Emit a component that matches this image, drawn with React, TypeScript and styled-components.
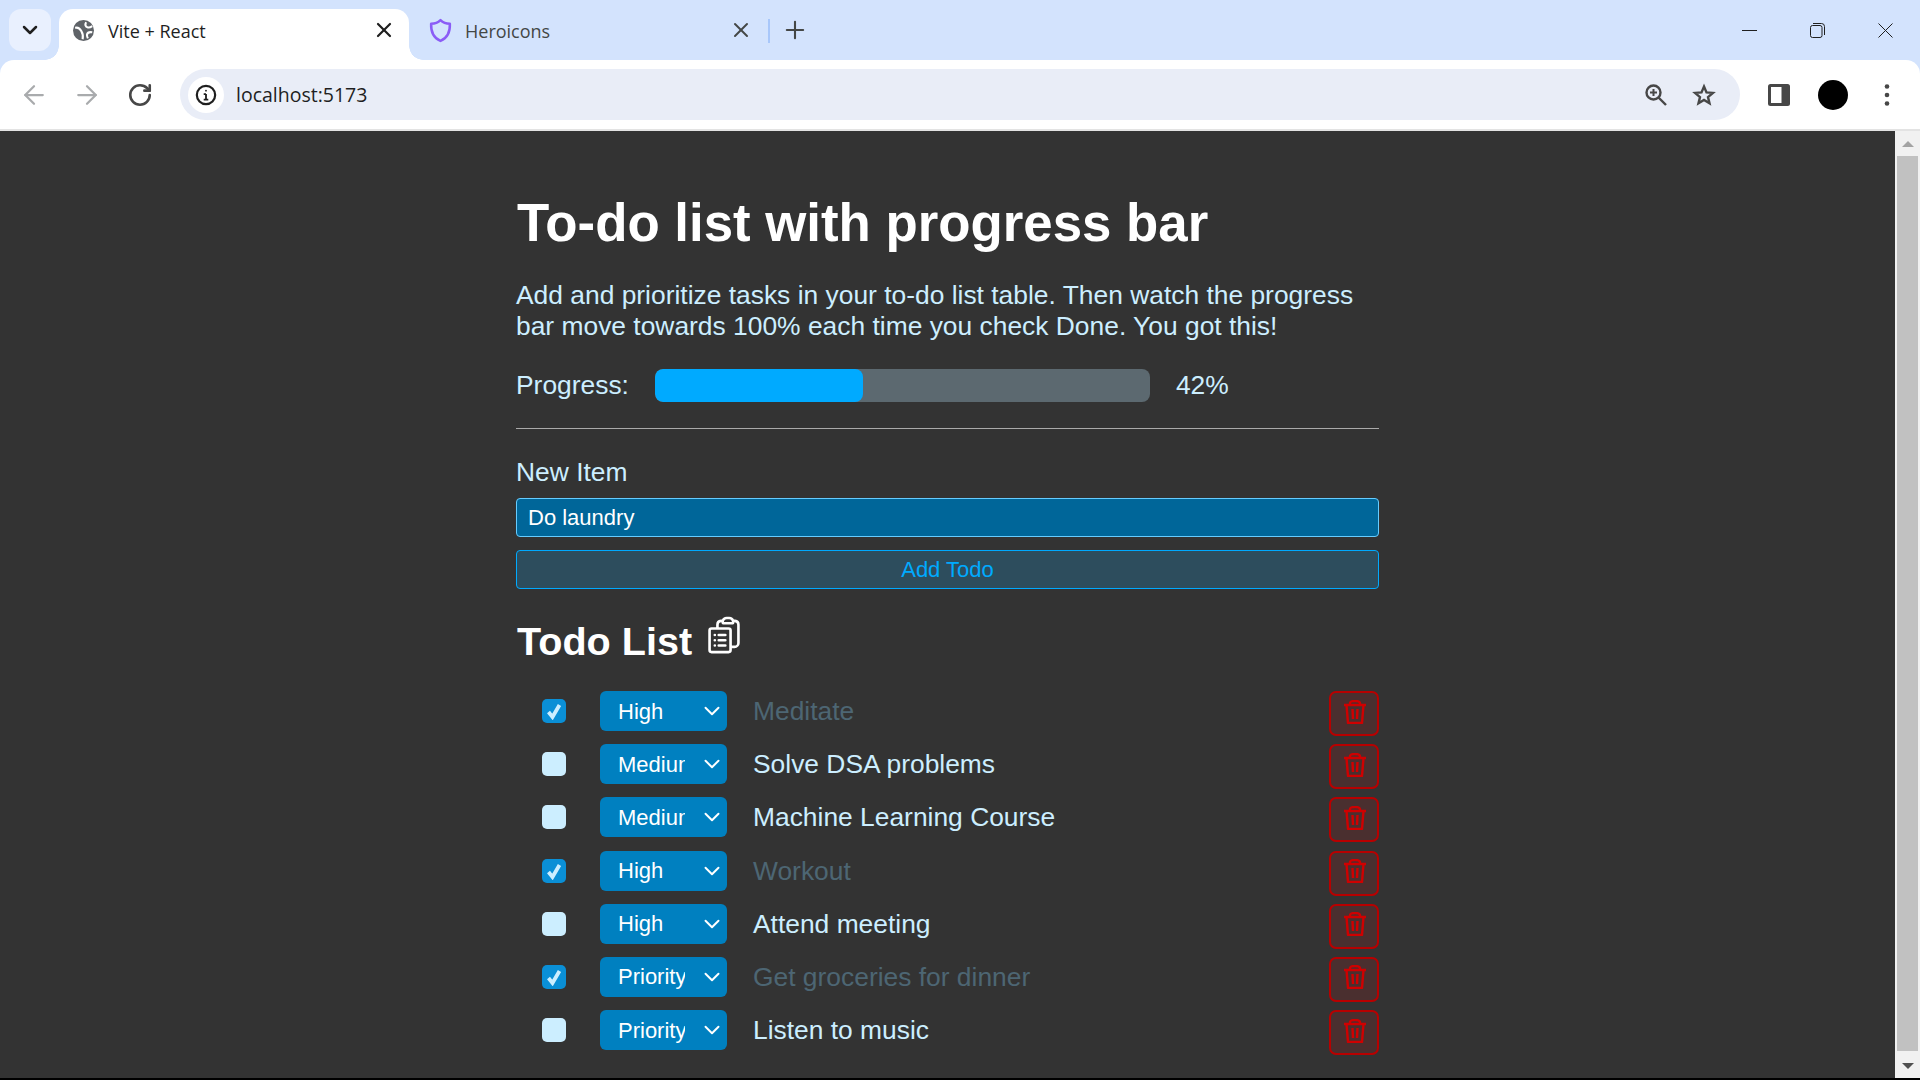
import React from 'react';
import styled, { createGlobalStyle } from 'styled-components';
import { ArrowLeft, ArrowRight, ChevronDown, Plus, RotateCw, X } from 'lucide-react';
import { HiOutlineClipboardDocumentList } from 'react-icons/hi2';

const todos = [
  { priority: 'High', text: 'Meditate', done: true },
  { priority: 'Medium', text: 'Solve DSA problems', done: false },
  { priority: 'Medium', text: 'Machine Learning Course', done: false },
  { priority: 'High', text: 'Workout', done: true },
  { priority: 'High', text: 'Attend meeting', done: false },
  { priority: 'Priority', text: 'Get groceries for dinner', done: true },
  { priority: 'Priority', text: 'Listen to music', done: false },
];

const GlobalStyle = createGlobalStyle`
  html, body {
    margin: 0;
    height: 100%;
    overflow: hidden;
    background: #333;
  }
  body {
    font-family: "Liberation Sans", Arial, sans-serif;
  }
`;

const Shell = styled.div`
  display: flex;
  flex-direction: column;
  height: 1080px;
  background: #d3e3fd;
`;

const TabStrip = styled.div`
  display: flex;
  align-items: flex-end;
  height: 60px;
  padding-left: 9px;
  font-family: "Open Sans", "Noto Sans", sans-serif;
  font-size: 18px;
`;

const TabMenu = styled.div`
  display: flex;
  align-items: center;
  justify-content: center;
  width: 42px;
  height: 42px;
  margin-bottom: 9px;
  border-radius: 12px;
  background: #e9f0fe;
  color: #1f1f1f;
`;

const ActiveTab = styled.div`
  position: relative;
  display: flex;
  align-items: center;
  width: 350px;
  height: 51px;
  margin-left: 8px;
  padding: 0 13px 9px 14px;
  box-sizing: border-box;
  border-radius: 14px 14px 0 0;
  background: #fff;
  color: #1f1f1f;

  &::before,
  &::after {
    content: '';
    position: absolute;
    bottom: 0;
    width: 14px;
    height: 14px;
  }
  &::before {
    left: -14px;
    background: radial-gradient(circle at 0 0, transparent 13.5px, #fff 14px);
  }
  &::after {
    right: -14px;
    background: radial-gradient(circle at 100% 0, transparent 13.5px, #fff 14px);
  }
`;

const Tab = styled.div`
  display: flex;
  align-items: center;
  width: 346px;
  height: 51px;
  padding: 0 2px 9px 19px;
  box-sizing: border-box;
  color: #444746;
`;

const TabTitle = styled.span<{ $gap: number }>`
  flex: 1;
  margin: 2px 0 0 ${({ $gap }) => $gap}px;
`;

const TabDivider = styled.div`
  width: 2px;
  height: 24px;
  margin: 0 11px 17px 13px;
  background: #a8c7fa;
`;

const NewTab = styled.div`
  display: flex;
  align-items: center;
  height: 51px;
  padding-bottom: 9px;
  box-sizing: border-box;
  color: #444746;
`;

const WindowButtons = styled.div`
  display: flex;
  align-items: center;
  gap: 53px;
  margin-left: auto;
  height: 60px;
  padding-right: 27px;
  color: #1f1f1f;
`;

const Toolbar = styled.div`
  display: flex;
  align-items: center;
  height: 69px;
  padding: 0 30px 0 19px;
  border-radius: 14px 14px 0 0;
  background: #fff;
  box-sizing: border-box;
`;

const NavIcons = styled.div`
  display: flex;
  align-items: center;
  gap: 23px;
  margin-right: 25px;
`;

const NavCell = styled.div`
  display: flex;
  align-items: center;
  justify-content: center;
  width: 30px;
  height: 30px;
`;

const Omnibox = styled.div`
  display: flex;
  align-items: center;
  flex: 1;
  height: 51px;
  padding: 0 24px 0 8px;
  border-radius: 26px;
  background: #e9edf7;
  color: #1f1f1f;
  font-family: "Open Sans", "Noto Sans", sans-serif;
  font-size: 19.500px;
`;

const SiteInfo = styled.div`
  display: flex;
  align-items: center;
  justify-content: center;
  width: 36px;
  height: 36px;
  margin-right: 12px;
  border-radius: 50%;
  background: #fff;
`;

const Url = styled.span`
  flex: 1;
`;

const OmniIcons = styled.div`
  display: flex;
  align-items: center;
  gap: 25px;
`;

const ToolIcons = styled.div`
  display: flex;
  align-items: center;
  margin-left: 28px;
`;

const Avatar = styled.div`
  width: 30px;
  height: 30px;
  margin: 0 36px 0 28px;
  border-radius: 50%;
  background: #000;
`;

const ChromeRule = styled.div`
  height: 2px;
  background: #e3e3e3;
`;

const Viewport = styled.div`
  display: flex;
  height: 947px;
  background: #333;
`;

const BottomEdge = styled.div`
  height: 2px;
  background: #000;
`;

const Page = styled.main`
  flex: 1;
  display: flex;
  justify-content: center;
  overflow: hidden;
`;

const Column = styled.div`
  width: 863px;
  padding-top: 62px;
  color: #cceeff;
`;

const Title = styled.h1`
  margin: 0 0 0 1px;
  color: #fff;
  font-size: 52.8px;
  line-height: 60px;
  font-weight: 700;
`;

const Intro = styled.p`
  margin: 27px 0 0;
  font-size: 26.4px;
  line-height: 31px;
`;

const ProgressRow = styled.div`
  display: flex;
  align-items: center;
  margin-top: 27px;
  font-size: 26.4px;
`;

const ProgressTrack = styled.div`
  width: 495px;
  height: 33px;
  margin: 0 26px;
  border-radius: 8px;
  background: #5c6970;
  overflow: hidden;
`;

const ProgressFill = styled.div`
  height: 100%;
  border-radius: 8px;
  background: #00aaff;
`;

const Rule = styled.hr`
  height: 1px;
  margin: 26px 0 0;
  border: 0;
  background: #aaa;
`;

const FieldLabel = styled.label`
  display: block;
  margin-top: 28px;
  font-size: 26.4px;
  line-height: 31px;
`;

const TextInput = styled.input`
  display: block;
  width: 100%;
  height: 39px;
  margin-top: 10px;
  padding: 0 11px;
  box-sizing: border-box;
  border: 1px solid #66ccff;
  border-radius: 4px;
  outline: none;
  background: #006699;
  color: #fff;
  font: 22px "Liberation Sans", Arial, sans-serif;
`;

const AddButton = styled.button`
  display: block;
  width: 100%;
  height: 39px;
  margin-top: 13px;
  padding: 0;
  box-sizing: border-box;
  border: 1px solid #00aaff;
  border-radius: 4px;
  background: #2d4d5d;
  color: #00aaff;
  font: 22px "Liberation Sans", Arial, sans-serif;
`;

const ListHeading = styled.h2`
  display: flex;
  align-items: center;
  gap: 11px;
  margin: 29px 0 0 1px;
  color: #fff;
  font-size: 39.6px;
  line-height: 46px;
  font-weight: 700;

  svg {
    width: 42px;
    height: 42px;
    margin-top: -12px;
  }
`;

const List = styled.ul`
  margin: 27px 0 0;
  padding: 0;
  list-style: none;
`;

const Row = styled.li`
  display: flex;
  align-items: flex-start;
  height: 53.2px;
`;

const CheckBox = styled.span<{ $checked: boolean }>`
  display: flex;
  align-items: center;
  justify-content: center;
  width: 24px;
  height: 24px;
  margin: 8px 34px 0 26px;
  border-radius: 5px;
  background: ${({ $checked }) => ($checked ? '#0a8fd6' : '#cceeff')};
`;

const SelectWrap = styled.div`
  position: relative;
  width: 127px;
  height: 40px;
`;

const PrioritySelect = styled.select`
  display: block;
  width: 100%;
  height: 100%;
  padding: 0 42px 0 18px;
  border: 0;
  border-radius: 6px;
  outline: none;
  appearance: none;
  background: #0080c0;
  color: #fff;
  font: 22px "Liberation Sans", Arial, sans-serif;
`;

const SelectChevron = styled(ChevronDown)`
  position: absolute;
  top: 7px;
  right: 2px;
  color: #fff;
  pointer-events: none;
`;

const TodoText = styled.span<{ $done: boolean }>`
  flex: 1;
  margin-left: 26px;
  font-size: 26.4px;
  line-height: 40px;
  color: ${({ $done }) => ($done ? '#4d6673' : '#cceeff')};
`;

const DeleteButton = styled.button`
  display: flex;
  align-items: center;
  justify-content: center;
  width: 50px;
  height: 45px;
  padding: 0 0 4px 2px;
  box-sizing: border-box;
  border: 2px solid #b80000;
  border-radius: 7px;
  background: #4a2f2f;
  color: #d00000;
`;

const Scrollbar = styled.div`
  display: flex;
  flex-direction: column;
  align-items: center;
  width: 25px;
  background: #f1f1f1;
`;

const ScrollArrow = styled.div<{ $down?: boolean }>`
  width: 0;
  height: 0;
  margin: ${({ $down }) => ($down ? '12px 0 9px' : '10px 0 9px')};
  border-left: 6px solid transparent;
  border-right: 6px solid transparent;
  border-${({ $down }) => ($down ? 'top' : 'bottom')}: 6px solid ${({ $down }) => ($down ? '#505050' : '#a3a3a3')};
`;

const ScrollThumb = styled.div`
  flex: 1;
  width: 21px;
  background: #c1c1c1;
`;

const GlobeIcon = () => (
  <svg width="21" height="21" viewBox="0 0 24 24" fill="none" stroke="#fff" strokeWidth="2.400">
    <circle cx="12" cy="12" r="12" fill="#5f6368" stroke="none" />
    <path d="M2.500 9C6 8 8 10 9.500 12.500 11 15 12 17 11 22" />
    <path d="M15 2.500C13.500 5 14 8 17 8.500 19 9 20.500 8 22 7" />
    <path d="M22 14C19 13.500 16.500 14.500 16 16.500 15.700 18 16.500 20 17 21" />
  </svg>
);

const ShieldIcon = () => (
  <svg width="25" height="25" viewBox="0 0 24 24" fill="none" stroke="#8b5cf6" strokeWidth="2.400" strokeLinejoin="round">
    <path d="M12 2C9.500 4.500 6.500 5.500 3 5.500 2.700 13 5 19 12 22c7-3 9.300-9 9-16.500-3.500 0-6.500-1-9-3.500z" />
  </svg>
);

const InfoIcon = () => (
  <svg width="22" height="22" viewBox="0 0 24 24" fill="none" stroke="#1f1f1f" strokeWidth="2.400">
    <circle cx="12" cy="12" r="10" />
    <path d="M12 11v6M9.500 11H12M9.500 17h5" strokeWidth="2" />
    <circle cx="12" cy="7.300" r="1" fill="#1f1f1f" stroke="none" />
  </svg>
);

const ZoomGlassIcon = () => (
  <svg width="22" height="22" viewBox="0 0 22 22" fill="none" stroke="#474747" strokeWidth="2.400">
    <circle cx="8.500" cy="8.500" r="7" />
    <path d="M13.500 13.500 21 21" />
    <path d="M8.500 5v7M5 8.500h7" strokeWidth="2" />
  </svg>
);

const StarIcon = () => (
  <svg width="24" height="23" viewBox="0 0 24 23" fill="none" stroke="#474747" strokeWidth="2.400" strokeLinejoin="miter">
    <path d="M12 3.500l2.500 5.900 6.400.5-4.900 4.200 1.500 6.200-5.500-3.300-5.500 3.300 1.500-6.200-4.900-4.200 6.400-.5z" />
  </svg>
);

const SidePanelIcon = () => (
  <svg width="22" height="22" viewBox="0 0 22 22">
    <rect x="0" y="0" width="22" height="22" rx="2.500" fill="#474747" />
    <rect x="3" y="3" width="10.500" height="16" fill="#fff" />
  </svg>
);

const RestoreIcon = () => (
  <svg width="15" height="15" viewBox="0 0 15 15" fill="none" stroke="#1f1f1f" strokeWidth="1">
    <rect x="0.500" y="2.500" width="11.500" height="12" rx="2" />
    <path d="M3 .500h8.500a3 3 0 0 1 3 3V12" />
  </svg>
);

const DotsIcon = () => (
  <svg width="6" height="22" viewBox="0 0 6 22" fill="#474747">
    <circle cx="3" cy="2.500" r="2.300" />
    <circle cx="3" cy="11" r="2.300" />
    <circle cx="3" cy="19.500" r="2.300" />
  </svg>
);

const CheckMark = () => (
  <svg width="18" height="18" viewBox="0 0 18 18" fill="none">
    <path d="M3.500 10 7.500 15 14.500 3" stroke="#cceeff" strokeWidth="3.800" />
  </svg>
);

const TrashIcon = () => (
  <svg width="22" height="24" viewBox="0 0 22 24" fill="none" stroke="currentColor" strokeWidth="2.400" strokeLinejoin="round">
    <path d="M0 5h22M2.500 5 4 23h14l1.500-18" />
    <path d="M6 5V3.500C6 1.500 8 1 11 1s5 .500 5 2.500V5" />
    <path d="M8.500 9 9 19M13.500 9 13 19" />
  </svg>
);

export default function App() {
  return (
    <Shell>
      <GlobalStyle />
      <TabStrip>
        <TabMenu>
          <ChevronDown size={24} strokeWidth={2.500} />
        </TabMenu>
        <ActiveTab>
          <GlobeIcon />
          <TabTitle $gap={14}>Vite + React</TabTitle>
          <X size={24} strokeWidth={2.200} />
        </ActiveTab>
        <Tab>
          <ShieldIcon />
          <TabTitle $gap={12}>Heroicons</TabTitle>
          <X size={24} strokeWidth={2} />
        </Tab>
        <TabDivider />
        <NewTab>
          <Plus size={28} strokeWidth={1.800} />
        </NewTab>
        <WindowButtons>
          <svg width="15" height="1" viewBox="0 0 15 1"><rect width="15" height="1" fill="#1f1f1f" /></svg>
          <RestoreIcon />
          <svg width="15" height="15" viewBox="0 0 15 15" stroke="#1f1f1f"><path d="M.500 .500l14 14M14.500 .500l-14 14" /></svg>
        </WindowButtons>
      </TabStrip>
      <Toolbar>
        <NavIcons>
          <NavCell><ArrowLeft size={30} color="#a9abad" strokeWidth={1.800} /></NavCell>
          <NavCell><ArrowRight size={30} color="#a9abad" strokeWidth={1.800} /></NavCell>
          <NavCell><RotateCw size={26} color="#474747" strokeWidth={2.400} /></NavCell>
        </NavIcons>
        <Omnibox>
          <SiteInfo>
            <InfoIcon />
          </SiteInfo>
          <Url>localhost:5173</Url>
          <OmniIcons>
            <ZoomGlassIcon />
            <StarIcon />
          </OmniIcons>
        </Omnibox>
        <ToolIcons>
          <SidePanelIcon />
          <Avatar />
          <DotsIcon />
        </ToolIcons>
      </Toolbar>
      <ChromeRule />
      <Viewport>
        <Page>
          <Column>
            <Title>To-do list with progress bar</Title>
            <Intro>
              Add and prioritize tasks in your to-do list table. Then watch the progress bar move towards 100% each time you check Done. You got this!
            </Intro>
            <ProgressRow>
              <span>Progress:</span>
              <ProgressTrack>
                <ProgressFill style={{ width: '42%' }} />
              </ProgressTrack>
              <span>42%</span>
            </ProgressRow>
            <Rule />
            <FieldLabel htmlFor="new-item">New Item</FieldLabel>
            <TextInput id="new-item" defaultValue="Do laundry" />
            <AddButton>Add Todo</AddButton>
            <ListHeading>
              Todo List
              <HiOutlineClipboardDocumentList />
            </ListHeading>
            <List>
              {todos.map((todo) => (
                <Row key={todo.text}>
                  <CheckBox $checked={todo.done}>{todo.done && <CheckMark />}</CheckBox>
                  <SelectWrap>
                    <PrioritySelect defaultValue={todo.priority}>
                      <option>Priority</option>
                      <option>High</option>
                      <option>Medium</option>
                      <option>Low</option>
                    </PrioritySelect>
                    <SelectChevron size={26} strokeWidth={1.800} />
                  </SelectWrap>
                  <TodoText $done={todo.done}>{todo.text}</TodoText>
                  <DeleteButton aria-label="Delete">
                    <TrashIcon />
                  </DeleteButton>
                </Row>
              ))}
            </List>
          </Column>
        </Page>
        <Scrollbar>
          <ScrollArrow />
          <ScrollThumb />
          <ScrollArrow $down />
        </Scrollbar>
      </Viewport>
      <BottomEdge />
    </Shell>
  );
}
